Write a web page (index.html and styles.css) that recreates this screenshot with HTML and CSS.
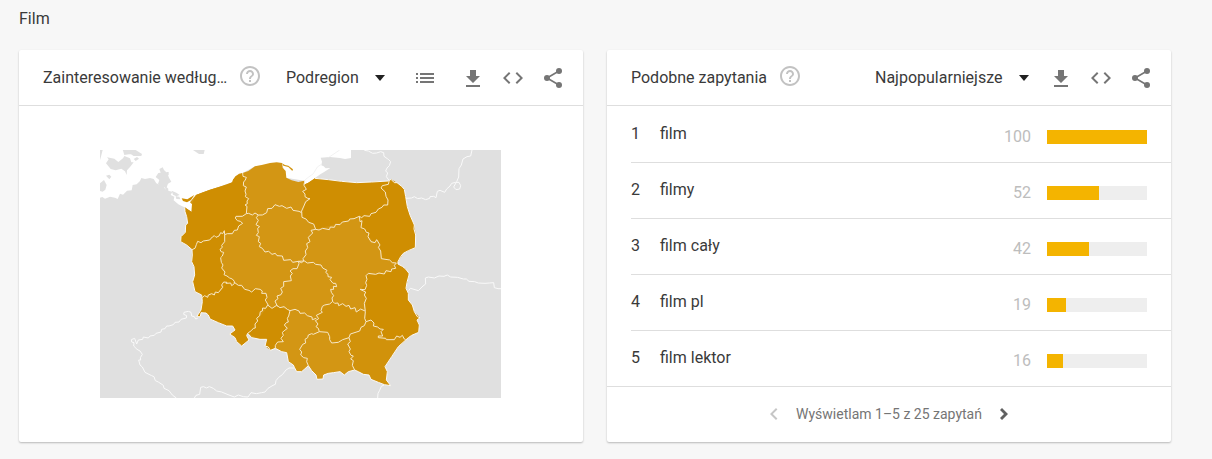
FILE: index.html
```html
<!DOCTYPE html>
<html lang="pl">
<head>
    <meta charset="UTF-8">
    <meta name="viewport" content="width=device-width, initial-scale=1.0">
    <title>Film</title>
    <link rel="stylesheet" href="styles.css">
</head>
<body>
    <!-- shared icons -->
    <svg class="sprite" aria-hidden="true">
        <symbol id="help" viewBox="0 0 24 24"><path d="M11 18h2v-2h-2v2zm1-16C6.480 2 2 6.480 2 12s4.480 10 10 10 10-4.480 10-10S17.520 2 12 2zm0 18c-4.410 0-8-3.590-8-8s3.590-8 8-8 8 3.590 8 8-3.590 8-8 8zm0-14c-2.210 0-4 1.790-4 4h2c0-1.100.9-2 2-2s2 .9 2 2c0 2-3 1.750-3 5h2c0-2.250 3-2.500 3-5 0-2.210-1.790-4-4-4z"/></symbol>
        <symbol id="list" viewBox="0 0 24 24"><path d="M3 13h2v-2H3v2zm0 4h2v-2H3v2zm0-8h2V7H3v2zm4 4h14v-2H7v2zm0 4h14v-2H7v2zM7 7v2h14V7H7z"/></symbol>
        <symbol id="download" viewBox="0 0 24 24"><path d="M19 10h-4V4H9v6H5l7 7 7-7zM5 19v2h14v-2H5z"/></symbol>
        <symbol id="code" viewBox="0 0 24 24"><path d="M9.400 16.600L4.800 12l4.600-4.600L8 6l-6 6 6 6 1.400-1.400zm5.200 0l4.600-4.600-4.600-4.600L16 6l6 6-6 6-1.400-1.400z"/></symbol>
        <symbol id="share" viewBox="0 0 24 24"><path d="M6 12L18 5M6 12l12 7" fill="none" stroke="currentColor" stroke-width="1.600"/><circle cx="6" cy="12" r="3"/><circle cx="18" cy="5" r="3"/><circle cx="18" cy="19" r="3"/></symbol>
        <symbol id="left" viewBox="0 0 24 24"><path d="M15.410 7.410L14 6l-6 6 6 6 1.410-1.410L10.830 12z"/></symbol>
        <symbol id="right" viewBox="0 0 24 24"><path d="M10 6L8 8 12 12 8 16 10 18l6-6z"/></symbol>
    </svg>

    <main class="page">
        <h1 class="page-title">Film</h1>

        <div class="widgets">
            <section class="card">
                <header class="card-header">
                    <div class="heading">
                        <h2 class="card-title">Zainteresowanie według…</h2>
                        <button class="help-button" aria-label="Pomoc"><svg class="icon"><use href="#help"/></svg></button>
                    </div>
                    <div class="dropdown">
                        <select class="select" aria-label="Podział">
                            <option>Podregion</option>
                        </select>
                    </div>
                    <button class="icon-button view-toggle" aria-label="Lista"><svg class="icon"><use href="#list"/></svg></button>
                    <button class="icon-button" aria-label="Pobierz"><svg class="icon"><use href="#download"/></svg></button>
                    <button class="icon-button" aria-label="Umieść"><svg class="icon"><use href="#code"/></svg></button>
                    <button class="icon-button" aria-label="Udostępnij"><svg class="icon"><use href="#share"/></svg></button>
                </header>
                <div class="map-area">
                    <svg class="map" viewBox="15 15 1203 744" role="img" aria-label="Mapa Polski">
                        <rect class="land" x="15" y="15" width="1203" height="744"/>
                        <!-- Baltic Sea -->
                        <path class="sea" d="M15 10V158L22 156 30 161 45 155 60 158 68 162 75 146 84 149 96 137 110 136 113 120 125 118 135 108 139 99 150 102 165 99 176 102 184 115 197 121 205 117 210 132 222 138 232 140 227 150 238 155 236 166 250 178 260 183 269 187 290 201 291 178 303 150 345 134 412 112 422 94 443 84 480 64 561 54 573 98 628 107 625 119 632 121 638 114 650 109 661 98 677 87 686 82 706 69 692 70 686 64 679 61 681 50 677 38 705 36 735 39 750 42 768 39V10z"/>
                        <!-- islands -->
                        <path class="land" d="M15 15h8l-4 16-4 15zM82 10l6 20 14-2 6 0 8 5 23 0 2-6-19-12zM33 55l8-12-5-6 22 4 12 10 14-11 4-7 17 7 4 12 7 0-11 14-9 10-1 14-5-11-11-8-17 5-15-4zM116 42l10-6 6 5-10 7zM33 92l10-3 6 6-6 8zM15 115l12-10 8 15-4 14-8 6-8-2zM182 96l8-12 7-1-4-11 10-5 4 8 10 10 5 13 7 12-10 6-4 11 5 4-1 14-6-2-3-16-13-4-8-6 4-12zM215 81l6 0 0 10-6-3zM294 15h35l-3 12-14 0zM230 137l14 6 10 7-10 4-10-5zM242 154l11 1 3 8-12-1z"/>
                        <path class="spit" d="M625 110l12-11 18-13 12-20 12-8M700 38l34-23"/>
                        <path class="region" d="M561 55L570 60 580 62 594 73 592 78 580 66 565 62z"/>

                        <path class="region" d="M303 150L320 143 345 134 372 126 398 119 412 112 414 104 422 94 432 86 443 84 460 78 480 64 500 60 525 54 545 52 561 54 563 68 572 78 574 98 590 106 610 111 628 107 626 119 640 113 660 100 700 104 740 109 785 113 830 111 880 108 888 103 898 113 906 113 920 124 928 133 932 155 937 185 945 210 958 240 957 252 962 270 961 308 940 317 925 325 917 335 909 350 909 357 922 364 932 372 942 385 942 390 936 412 933 430 940 445 940 465 952 480 958 500 967 515 975 518 966 525 973 540 971 562 950 571 940 578 910 605 890 635 870 665 877 680 874 705 887 722 868 719 850 712 828 703 822 690 805 688 790 680 779 675 760 680 748 690 735 680 715 683 700 685 686 690 684 702 666 703 663 690 650 677 640 662 628 673 620 680 605 680 598 667 595 660 580 650 575 623 560 620 541 610 526 616 520 606 510 603 515 583 495 583 470 578 458 565 455 572 462 585 440 603 425 590 420 578 404 567 420 555 413 543 395 543 370 533 345 522 340 510 333 504 318 503 316 515 305 515 318 495 322 470 320 450 300 440 293 410 299 390 297 365 290 350 292 330 291 314 275 300 257 290 258 275 271 262 272 240 278 235 275 215 270 200 269 187 290 201 291 178 285 172 297 157z"/>
                        <path class="region high" d="M260 160L277 163 298 150 288 165 276 172 264 168z"/>

                        <!-- regions with higher interest -->
                        <path class="region high" d="M303 150L345 134 372 126 412 112 414 104 422 94 443 84 453 95 446 122 452 150 461 160 451 178 457 195 453 208 422 214 428 226 442 236 425 255 389 269 388 258 368 274 325 288 291 314 275 300 257 290 258 275 271 262 272 240 278 235 275 215 269 187 290 201 291 178z"/>
                        <path class="region high" d="M291 314L300 310 310 293 368 274 388 262 387 290 376 312 385 322 378 345 385 360 380 375 395 390 415 405 410 422 380 420 370 443 350 445 320 459 320 450 300 440 293 410 299 390 297 365 290 350z"/>
                        <path class="region high" d="M320 450L338 455 370 443 383 430 395 413 415 415 450 433 500 435 515 458 518 485 505 490 485 528 480 548 458 565 455 572 462 585 440 603 425 590 420 578 404 567 420 555 413 543 395 543 370 533 345 522 340 510 333 504 318 503 316 515 305 515 318 495 322 470z"/>
                        <path class="region high" d="M518 485L550 485 585 497 580 520 568 540 572 557 560 590 541 600 541 610 526 616 510 603 515 583 495 583 458 565 480 548 485 528z"/>
                        <path class="region high" d="M627 119L640 113 660 100 785 113 882 108 880 117 860 130 877 160 878 178 845 198 793 214 740 233 662 253 655 238 622 215 628 180 645 162 628 150z"/>
                        <path class="region high" d="M793 214L845 198 878 178 877 160 860 130 888 103 906 113 928 133 937 185 945 210 958 240 962 270 961 308 925 325 909 350 906 357 862 340 850 285 835 290 798 248z"/>
                        <path class="region high" d="M906 357L932 372 942 390 933 430 940 445 940 465 952 480 958 500 975 518 966 525 973 540 971 562 950 571 935 583 915 572 885 583 858 573 855 550 828 525 813 530 812 440 800 430 815 415 815 392 875 385z"/>
                        <path class="region mid" d="M813 530L828 525 855 550 858 573 885 583 915 575 932 586 910 605 870 665 877 680 874 705 887 722 850 712 828 703 822 690 778 675 762 618 762 578 800 548z"/>
                        <path class="region mid" d="M710 467L745 480 780 500 808 497 813 530 790 560 762 578 710 593 695 563 672 560 665 520 678 495z"/>

                        <!-- country borders -->
                        <path class="border" d="M308 520L302 522 298 515 290 513 288 502 280 499 267 502 266 508 275 512 274 519 258 523 252 531 240 532 235 539 222 543 215 543 210 551 200 553 198 561 183 565 178 571 165 573 160 579 145 576 143 583 130 585 125 597 119 580 109 584 110 591 117 593 116 603 126 613 135 618 142 628 136 638 137 645 131 645 135 660 142 666 150 682 170 692 177 695 181 707 190 711 205 721 207 730 222 737 232 750 244 759M298 759L303 751 314 748 317 727 326 725 334 729 343 725 355 730 365 738 380 741 399 749 418 756 430 750 445 755 459 756 468 743 484 746 500 743 510 741 519 730 534 721 541 718 543 707 551 697 562 689 573 675 582 669 598 669"/>
                        <path class="border" d="M867 720L859 724 854 736 849 745 848 759M941 437L946 430 957 433 970 437 984 423 992 417 991 399 1000 396 1018 399 1032 393 1047 394 1057 390 1067 396 1088 397 1105 402 1114 402 1122 409 1139 410 1150 414 1170 415 1183 414 1196 413 1198 428 1209 431 1218 431"/>
                        <path class="border" d="M933 160L950 159 958 155 968 161 980 159 992 164 1004 160 1005 155 1016 154 1023 158 1027 139 1035 136 1049 142 1055 132 1065 123 1070 115 1082 112 1092 112 1097 122 1094 132 1083 134 1076 126 1085 110 1091 96 1092 71 1099 60 1104 42 1116 35 1127 33 1131 15M808 16L820 18 833 25 845 24 857 20 866 23 867 34 877 41 880 43 887 50 883 62 876 69 872 78 878 84 874 95 882 106"/>
                        <path class="border" d="M660 100L700 104 740 109 785 113 830 111 880 108 888 103 898 113 906 113 920 124 928 133 932 155 937 185 945 210 958 240 957 252 962 270 961 308 940 317 925 325 917 335 909 350 909 357 922 364 932 372 942 385 942 390 936 412 933 430 940 445 940 465 952 480 958 500 967 515 975 518 966 525 973 540 971 562 950 571 940 578 910 605 890 635 870 665 877 680 874 705 887 722 868 719 850 712 828 703 822 690 805 688 790 680 779 675 760 680 748 690 735 680 715 683 700 685 686 690 684 702 666 703 663 690 650 677 640 662 628 673 620 680 605 680 598 667 595 660 580 650 575 623 560 620 541 610 526 616 520 606 510 603 515 583 495 583 470 578 458 565 455 572 462 585 440 603 425 590 420 578 404 567 420 555 413 543 395 543 370 533 345 522 340 510 333 504 318 503 316 515 305 515 318 495 322 470 320 450 300 440 293 410 299 390 297 365 290 350 292 330 291 314 275 300 257 290 258 275 271 262 272 240 278 235 275 215 270 200 269 187"/>

                        <!-- voivodeship borders -->
                        <path class="line" d="M443 84L444 94 454 97 450 107 446 110 445 122 454 126 450 138 453 148 451 155 461 161 456 168 457 176 450 180 456 184 454 206 442 214 423 214 421 219 427 227 436 229 443 235 431 243 427 255 418 256 412 266 397 266 389 269 388 257 383 266 377 263 372 273 363 277 358 272 352 276 344 285 325 288 318 293 308 289 304 299 300 310 291 314"/>
                        <path class="line" d="M389 269V290L380 301 382 307 375 313 378 320 386 322 382 333 377 338 379 352 384 360 380 369 390 381 387 389 396 393 404 399 412 402 418 409 418 416 410 422 407 414 393 415 396 412 386 411 380 420 383 427 370 443 361 441 358 450 350 446 340 450 338 457 329 452 320 459M418 412L430 421 440 421 449 433 462 436 470 441 481 431 495 433 502 438 500 445 513 445 516 457 511 465 520 481"/>
                        <path class="line" d="M458 565L470 556 475 550 481 549 480 537 488 528 485 520 494 512 496 500 502 498 503 489 512 490 518 480 531 490 545 481 555 488 567 485 577 493 585 497 581 513 577 520 580 531 574 533 568 540 577 550 562 562 565 571 558 580 565 590 548 591 541 601 541 610"/>
                        <path class="line" d="M547 484L540 468 549 461 546 453 558 449 562 441 557 430 566 424 566 410 589 407 586 393 592 385 585 378 594 371 606 371 612 356 610 349 593 352 587 344 566 346 562 333 546 332 541 325 531 328 521 319 510 321 502 310 493 305 497 295 490 290 493 275 484 271 490 263 488 250 494 245 483 239 490 226 484 218 490 210 480 204 472 210 461 205 454 206"/>
                        <path class="line" d="M490 210L502 210 515 203 518 191 531 190 540 179 553 184 561 182 575 190 588 186 594 196 612 199 618 202 628 180 632 170 645 161 638 160 630 155 630 147 623 139 634 133 627 121 629 110M620 201L621 217 633 222 641 232 656 237 662 253 648 256 653 264 640 277 645 290 635 296 638 308 631 318 633 329 624 341 626 348 610 349"/>
                        <path class="line" d="M662 253L672 255 683 250 703 254 706 246 718 247 722 238 735 239 742 231 761 228 764 222 777 221 793 214 800 218 807 212 824 214 828 206 843 202 850 192 861 187 866 180 878 180 879 165 873 154 871 141 858 129 862 122 880 118 883 106M793 214L795 230 801 227 798 248 809 252 814 262 822 264 819 275 828 290 840 293 845 284 855 300 850 307 857 318 859 341 884 345 892 353 904 354"/>
                        <path class="line" d="M904 354L898 361 902 370 890 372 888 380 873 377 868 387 852 384 842 388 820 385 813 392 816 403 812 413 815 421 810 434 795 433 812 441 808 450 814 460 808 475 811 500 809 520 813 530 828 525 837 534 835 543 848 546 855 552 865 553 858 560 863 573 850 573 850 578 872 580 874 584 898 584 905 573 915 577 922 571 928 582 934 587"/>
                        <path class="line" d="M610 349L620 353 627 347 637 354 655 352 662 358 678 360 683 369 696 376 692 382 699 388 699 395 710 397 705 404 714 415 722 415 725 425 715 424 716 433 707 433 709 442 716 452 711 459 713 469 704 477 689 480 682 484 678 497 682 502 664 511 671 521 661 527 669 537 663 545 670 550 673 560 698 562 704 575 704 584 710 594 730 592 743 584 762 578 766 567 794 558 798 547 808 542 813 530"/>
                        <path class="line" d="M713 469L719 475 729 474 731 482 743 476 753 484 762 481 767 492 780 488 784 501 797 492 810 498M585 497L600 493 612 498 615 505 629 504 637 512 651 516 652 524 664 520M673 560L655 568 650 566 640 570 638 578 630 583 632 594 623 598 614 613 620 621 617 630 626 638 637 640 635 650 640 662M762 578L766 590 758 597 766 612 762 620 768 631 775 633 767 642 775 647 772 661 779 675"/>
                    </svg>
                </div>
            </section>

            <section class="card">
                <header class="card-header">
                    <div class="heading">
                        <h2 class="card-title">Podobne zapytania</h2>
                        <button class="help-button" aria-label="Pomoc"><svg class="icon"><use href="#help"/></svg></button>
                    </div>
                    <div class="dropdown">
                        <select class="select" aria-label="Sortowanie">
                            <option>Najpopularniejsze</option>
                        </select>
                    </div>
                    <button class="icon-button" aria-label="Pobierz"><svg class="icon"><use href="#download"/></svg></button>
                    <button class="icon-button" aria-label="Umieść"><svg class="icon"><use href="#code"/></svg></button>
                    <button class="icon-button" aria-label="Udostępnij"><svg class="icon"><use href="#share"/></svg></button>
                </header>
                <ol class="queries">
                    <li class="query">
                        <span class="rank">1</span>
                        <a class="term" href="#">film</a>
                        <div class="score"><span class="value">100</span><div class="bar"><div class="bar-fill" style="width: 100%"></div></div></div>
                    </li>
                    <li class="query">
                        <span class="rank">2</span>
                        <a class="term" href="#">filmy</a>
                        <div class="score"><span class="value">52</span><div class="bar"><div class="bar-fill" style="width: 52%"></div></div></div>
                    </li>
                    <li class="query">
                        <span class="rank">3</span>
                        <a class="term" href="#">film cały</a>
                        <div class="score"><span class="value">42</span><div class="bar"><div class="bar-fill" style="width: 42%"></div></div></div>
                    </li>
                    <li class="query">
                        <span class="rank">4</span>
                        <a class="term" href="#">film pl</a>
                        <div class="score"><span class="value">19</span><div class="bar"><div class="bar-fill" style="width: 19%"></div></div></div>
                    </li>
                    <li class="query">
                        <span class="rank">5</span>
                        <a class="term" href="#">film lektor</a>
                        <div class="score"><span class="value">16</span><div class="bar"><div class="bar-fill" style="width: 16%"></div></div></div>
                    </li>
                </ol>
                <footer class="pager">
                    <button class="pager-button" aria-label="Poprzednie" disabled><svg class="icon"><use href="#left"/></svg></button>
                    <span>Wyświetlam 1–5 z 25 zapytań</span>
                    <button class="pager-button" aria-label="Następne"><svg class="icon"><use href="#right"/></svg></button>
                </footer>
            </section>
        </div>
    </main>
</body>
</html>
```

FILE: styles.css
```css
* {
    box-sizing: border-box;
}
body {
    margin: 0;
    background: #f7f7f7;
    color: #3a3a3a;
    font-family: Roboto, Arial, sans-serif;
    font-size: 16px;
    line-height: 24px;
}
button, select {
    font: inherit;
    color: inherit;
    border: none;
    background: none;
    padding: 0;
    margin: 0;
    cursor: pointer;
}
.sprite {
    display: none;
}
.icon {
    display: block;
    width: 24px;
    height: 24px;
    fill: currentColor;
}
.page {
    padding: 7px 41px 16px 19px;
}
.page-title {
    margin: 0 0 19px;
    font-size: 16px;
    font-weight: 400;
}
.widgets {
    display: grid;
    grid-template-columns: 1fr 1fr;
    gap: 24px;
}
.card {
    display: flex;
    flex-direction: column;
    min-width: 0;
    background: #fff;
    border-radius: 2px;
    box-shadow: 0 1px 2px rgba(0, 0, 0, 0.25);
}
.card-header {
    display: flex;
    align-items: center;
    height: 56px;
    padding: 0 10px 0 24px;
    border-bottom: 1px solid #dedede;
}
.heading {
    display: flex;
    flex: 1;
    align-items: center;
    gap: 11px;
    min-width: 0;
    margin-right: 20px;
}
.card-title {
    margin: 0;
    font-size: 16px;
    font-weight: 400;
    white-space: nowrap;
    overflow: hidden;
    text-overflow: ellipsis;
}
.help-button {
    color: #c2c2c2;
    padding-bottom: 3px;
}
.dropdown {
    display: flex;
    align-items: center;
    margin-right: 12px;
}
.dropdown::after {
    content: "";
    margin-left: -10px;
    border: 5px solid transparent;
    border-top: 6px solid #212121;
    border-bottom: none;
    pointer-events: none;
}
.select {
    appearance: none;
    padding-right: 26px;
}
.icon-button {
    display: flex;
    justify-content: center;
    width: 40px;
    color: #757575;
}
.view-toggle {
    margin: 0 8px;
}
.map-area {
    display: flex;
    flex: 1;
    align-items: flex-start;
    justify-content: center;
    padding: 44px 82px 44px 81px;
}
.map {
    width: 100%;
    max-width: 401px;
}
.land {
    fill: #e0e0e0;
}
.sea {
    fill: #fff;
}
.region {
    fill: #d39614;
}
.high {
    fill: #cf8e02;
}
.mid {
    fill: #d1920b;
}
.border, .line, .spit {
    fill: none;
    stroke: #fafafa;
    stroke-width: 3;
    stroke-linejoin: round;
}
.line {
    stroke: #f7e8c8;
}
.spit {
    stroke: #ececec;
    stroke-width: 2;
}
.queries {
    list-style: none;
    margin: 0;
    padding: 1px 0 0 24px;
}
.query {
    display: flex;
    align-items: center;
    height: 56px;
    padding: 0 24px 2px 0;
    border-bottom: 1px solid #dedede;
}
.query:last-child {
    height: 55px;
    border-bottom: none;
}
.rank {
    width: 29px;
}
.term {
    flex: 1;
    color: inherit;
    text-decoration: none;
}
.score {
    display: flex;
    align-items: center;
    gap: 16px;
    padding-top: 6px;
    color: #bdbdbd;
}
.bar {
    width: 100px;
    height: 14px;
    background: #eee;
}
.bar-fill {
    height: 100%;
    background: #f4b400;
}
.pager {
    display: flex;
    align-items: center;
    justify-content: center;
    gap: 10px;
    height: 56px;
    padding-bottom: 1px;
    border-top: 1px solid #dedede;
    color: #757575;
    font-size: 14px;
}
.pager-button {
    color: #616161;
}
.pager-button:disabled {
    color: #c6c6c6;
}
```
